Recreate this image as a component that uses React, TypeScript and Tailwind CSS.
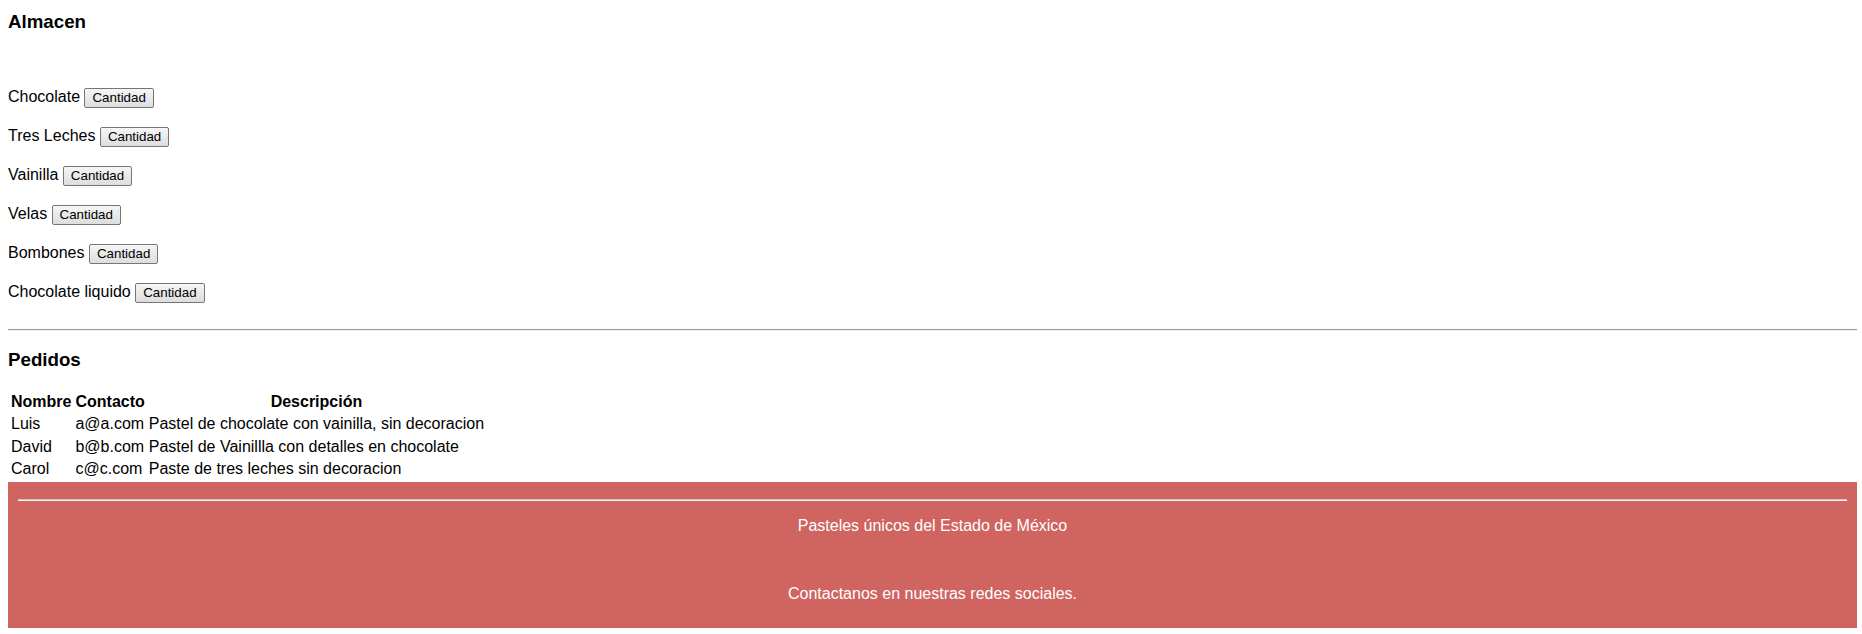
import React from "react";

const items = [
  "Chocolate",
  "Tres Leches",
  "Vainilla",
  "Velas",
  "Bombones",
  "Chocolate liquido",
];

const pedidos = [
  { nombre: "Luis", contacto: "a@a.com", desc: "Pastel de chocolate con vainilla, sin decoracion" },
  { nombre: "David", contacto: "b@b.com", desc: "Pastel de Vainillla con detalles en chocolate" },
  { nombre: "Carol", contacto: "c@c.com", desc: "Paste de tres leches sin decoracion" },
];

export default function App() {
  return (
    <div className="min-h-[634px] bg-white pl-[8px] pr-[5px] font-['Liberation_Sans',Arial,sans-serif] text-[16px] leading-[18.4px] text-black">
      <h3 className="mt-[11px] text-[18.72px] font-bold leading-[21.5px]">Almacen</h3>

      <div className="mt-[55.5px] flex flex-col gap-[16px]">
        {items.map((it) => (
          <div key={it} className="flex h-[23px] items-baseline gap-[4.45px]">
            <span>{it}</span>
            <button className="h-[20px] rounded-[2px] border border-[#767676] bg-linear-to-b from-[#f6f6f6] to-[#dddddd] px-[7px] text-[13.33px] leading-[16px] text-black">
              Cantidad
            </button>
          </div>
        ))}
      </div>

      <hr className="mt-[23px] h-0 border-0 border-t border-b border-t-[#9a9a9a] border-b-[#eeeeee]" />

      <h3 className="mt-[18px] text-[18.72px] font-bold leading-[21.5px]">Pedidos</h3>

      <table className="mt-[19.5px] border-separate border-spacing-[2px]">
        <thead>
          <tr>
            <th className="p-[1px] text-center font-bold">Nombre</th>
            <th className="p-[1px] text-center font-bold">Contacto</th>
            <th className="p-[1px] text-center font-bold">Descripción</th>
          </tr>
        </thead>
        <tbody>
          {pedidos.map((p) => (
            <tr key={p.nombre}>
              <td className="p-[1px]">{p.nombre}</td>
              <td className="p-[1px]">{p.contacto}</td>
              <td className="p-[1px]">{p.desc}</td>
            </tr>
          ))}
        </tbody>
      </table>

      <footer className="bg-[#cf6461] px-[10px] pt-[9px] pb-[25px] text-center text-white">
        <hr className="mt-[8px] h-0 border-0 border-t border-b border-t-[#c8c8c8] border-b-[#f4f4f4]" />
        <p className="mt-[16px]">Pasteles únicos del Estado de México</p>
        <p className="mt-[50px]">Contactanos en nuestras redes sociales.</p>
      </footer>
    </div>
  );
}
